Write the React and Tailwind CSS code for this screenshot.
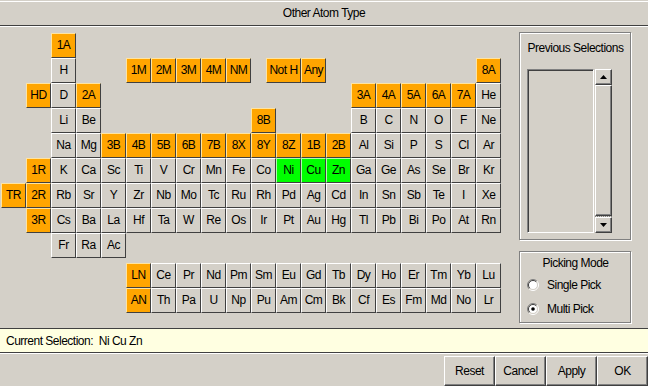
import React from "react";

const rows = [
  ["", "", "1A*"],
  null,
  ["", "HD*", "D", "2A*", "", "", "", "", "", "", "", "", "", "", "3A*", "4A*", "5A*", "6A*", "7A*", "He"],
  ["", "", "Li", "Be", "", "", "", "", "", "", "8B*", "", "", "", "B", "C", "N", "O", "F", "Ne"],
  ["", "", "Na", "Mg", "3B*", "4B*", "5B*", "6B*", "7B*", "8X*", "8Y*", "8Z*", "1B*", "2B*", "Al", "Si", "P", "S", "Cl", "Ar"],
  ["", "1R*", "K", "Ca", "Sc", "Ti", "V", "Cr", "Mn", "Fe", "Co", "Ni+", "Cu+", "Zn+", "Ga", "Ge", "As", "Se", "Br", "Kr"],
  ["TR*", "2R*", "Rb", "Sr", "Y", "Zr", "Nb", "Mo", "Tc", "Ru", "Rh", "Pd", "Ag", "Cd", "In", "Sn", "Sb", "Te", "I", "Xe"],
  ["", "3R*", "Cs", "Ba", "La", "Hf", "Ta", "W", "Re", "Os", "Ir", "Pt", "Au", "Hg", "Tl", "Pb", "Bi", "Po", "At", "Rn"],
  ["", "", "Fr", "Ra", "Ac"],
];

const fblock = [
  ["", "", "", "", "", "LN*", "Ce", "Pr", "Nd", "Pm", "Sm", "Eu", "Gd", "Tb", "Dy", "Ho", "Er", "Tm", "Yb", "Lu"],
  ["", "", "", "", "", "AN*", "Th", "Pa", "U", "Np", "Pu", "Am", "Cm", "Bk", "Cf", "Es", "Fm", "Md", "No", "Lr"],
];

function Cell({ label, wide }) {
  let kind = "gray";
  let text = label;
  if (label.endsWith("*")) {
    kind = "orange";
    text = label.slice(0, -1);
  } else if (label.endsWith("+")) {
    kind = "green";
    text = label.slice(0, -1);
  }
  const color =
    kind === "orange"
      ? "bg-[#ffa500] border-t-[#ffe4a0] border-l-[#ffe4a0]"
      : kind === "green"
      ? "bg-[#00ff00] border-t-[#b0ffb0] border-l-[#b0ffb0]"
      : "bg-[#d4d0c8] border-t-white border-l-white";
  return (
    <div
      className={`flex h-[25px] shrink-0 items-center justify-center whitespace-nowrap border border-b-[#404040] border-r-[#404040] ${
        wide ? "w-[35px]" : "w-[25px]"
      } ${color}`}
    >
      {text}
    </div>
  );
}

function Row({ cells }) {
  return (
    <div className="flex">
      {cells.map((c, i) =>
        c ? <Cell key={i} label={c} /> : <div key={i} className="w-[25px] shrink-0" />
      )}
    </div>
  );
}

function Raised({ className, children }) {
  return (
    <div
      className={`flex items-center justify-center border border-t-white border-l-white border-b-[#404040] border-r-[#404040] shadow-[inset_-1px_-1px_0_#808080] ${className}`}
    >
      {children}
    </div>
  );
}

function Radio({ checked }) {
  return (
    <svg width="12" height="12" viewBox="0 0 12 12">
      <circle cx="6" cy="6" r="4.5" fill="#fff" />
      <path d="M2.1 9.9 A5.5 5.5 0 0 1 9.9 2.1" fill="none" stroke="#808080" />
      <path d="M9.9 2.1 A5.5 5.5 0 0 1 2.1 9.9" fill="none" stroke="#fff" />
      <path d="M2.8 9.2 A4.5 4.5 0 0 1 9.2 2.8" fill="none" stroke="#404040" />
      <path d="M9.2 2.8 A4.5 4.5 0 0 1 2.8 9.2" fill="none" stroke="#d4d0c8" />
      {checked && <circle cx="6" cy="6" r="1.8" fill="#000" />}
    </svg>
  );
}

export default function App() {
  return (
    <div className="flex h-[386px] w-[648px] flex-col overflow-hidden bg-[#d4d0c8] font-['Liberation_Sans',Arial,sans-serif] text-[12px] leading-[14px] tracking-[-0.5px] text-black">
      <div className="mt-px flex h-[25px] items-center justify-center border-t border-b border-t-white border-b-[#404040]">
        Other Atom Type
      </div>

      <div className="flex h-[303px] border-t border-white">
        <div className="flex flex-col pl-px pt-[6px]">
          <Row cells={rows[0]} />
          <div className="flex">
            <div className="w-[50px] shrink-0" />
            <Cell label="H" />
            <div className="w-[50px] shrink-0" />
            <Cell label="1M*" />
            <Cell label="2M*" />
            <Cell label="3M*" />
            <Cell label="4M*" />
            <Cell label="NM*" />
            <div className="w-[15px] shrink-0" />
            <Cell label="Not H*" wide />
            <Cell label="Any*" />
            <div className="w-[150px] shrink-0" />
            <Cell label="8A*" />
          </div>
          {rows.slice(2).map((r, i) => (
            <Row key={i} cells={r} />
          ))}
          <div className="mt-[5px] flex flex-col">
            {fblock.map((r, i) => (
              <Row key={i} cells={r} />
            ))}
          </div>
        </div>

        <div className="ml-[18px] flex flex-col pt-[5px]">
          <div className="flex h-[208px] w-[112px] flex-col border border-[#808080] pl-[7px] pt-[8px] shadow-[inset_1px_1px_0_#fff,1px_1px_0_#fff]">
            <div className="whitespace-nowrap pr-[6px] text-center">Previous Selections</div>
            <div className="mt-[14px] flex h-[164px]">
              <div className="w-[67px] border border-t-[#808080] border-l-[#808080] border-r-white border-b-white shadow-[inset_1px_1px_0_#404040]" />
              <div className="ml-px flex w-[17px] flex-col">
                <Raised className="h-[16px]">
                  <svg width="7" height="4" viewBox="0 0 7 4">
                    <path d="M3.5 0 L7 4 L0 4 Z" fill="#000" />
                  </svg>
                </Raised>
                <Raised className="flex-1" />
                <div className="h-px border-t border-dotted border-[#808080]" />
                <Raised className="h-[16px]">
                  <svg width="7" height="4" viewBox="0 0 7 4">
                    <path d="M0 0 L7 0 L3.5 4 Z" fill="#000" />
                  </svg>
                </Raised>
              </div>
            </div>
          </div>

          <div className="mt-[11px] flex h-[72px] w-[112px] flex-col border border-[#808080] pl-[7px] pt-[4px] shadow-[inset_1px_1px_0_#fff,1px_1px_0_#fff]">
            <div className="whitespace-nowrap pr-[6px] text-center">Picking Mode</div>
            <div className="mt-[3px] flex h-[24px] items-center gap-[8px]">
              <Radio />
              <span>Single Pick</span>
            </div>
            <div className="flex h-[24px] items-center gap-[8px]">
              <Radio checked />
              <span>Multi Pick</span>
            </div>
          </div>
        </div>
      </div>

      <div className="flex h-[25px] items-center whitespace-pre border-t border-b border-[#404040] bg-[#ffffe1] pl-[6px]">
        Current Selection:  Ni Cu Zn
      </div>

      <div className="flex flex-1 justify-end border-t border-white pt-[2px]">
        <Raised className="h-[30px] w-[51px]">Reset</Raised>
        <Raised className="h-[30px] w-[51px]">Cancel</Raised>
        <Raised className="h-[30px] w-[51px]">Apply</Raised>
        <Raised className="h-[30px] w-[51px]">OK</Raised>
      </div>
    </div>
  );
}
